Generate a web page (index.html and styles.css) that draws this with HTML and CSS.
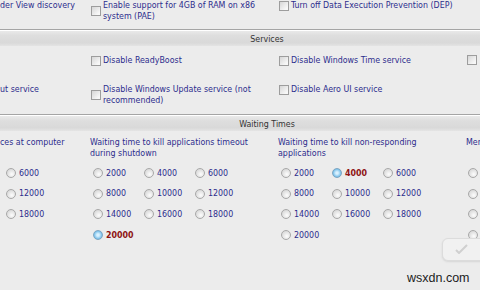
FILE: index.html
```html
<!DOCTYPE html>
<html lang="en">
<head>
    <meta charset="UTF-8">
    <title>Tweaks</title>
    <link rel="stylesheet" href="styles.css">
</head>
<body>
    <div class="row top-row">
        <div class="cell">der View discovery</div>
        <label class="check"><span class="box"></span><span>Enable support for 4GB of RAM on x86<br>system (PAE)</span></label>
        <label class="check"><span class="box"></span><span>Turn off Data Execution Prevention (DEP)</span></label>
        <div class="cell"></div>
    </div>

    <div class="section-head">Services</div>

    <div class="row services">
        <div class="cell"></div>
        <label class="check"><span class="box"></span><span>Disable ReadyBoost</span></label>
        <label class="check"><span class="box"></span><span>Disable Windows Time service</span></label>
        <label class="check"><span class="box"></span><span></span></label>

        <div class="cell">ut service</div>
        <label class="check"><span class="box"></span><span>Disable Windows Update service (not<br>recommended)</span></label>
        <label class="check"><span class="box"></span><span>Disable Aero UI service</span></label>
        <div class="cell"></div>
    </div>

    <div class="section-head second">Waiting Times</div>

    <div class="row times">
        <div class="group">
            <div class="caption">ces at computer<br>&nbsp;</div>
            <div class="radios single">
                <span class="radio"><i></i>6000</span>
                <span class="radio"><i></i>12000</span>
                <span class="radio"><i></i>18000</span>
            </div>
        </div>
        <div class="group">
            <div class="caption">Waiting time to kill applications timeout<br>during shutdown</div>
            <div class="radios">
                <span class="radio"><i></i>2000</span>
                <span class="radio"><i></i>4000</span>
                <span class="radio"><i></i>6000</span>
                <span class="radio"><i></i>8000</span>
                <span class="radio"><i></i>10000</span>
                <span class="radio"><i></i>12000</span>
                <span class="radio"><i></i>14000</span>
                <span class="radio"><i></i>16000</span>
                <span class="radio"><i></i>18000</span>
                <span class="radio on"><i></i>20000</span>
            </div>
        </div>
        <div class="group">
            <div class="caption">Waiting time to kill non-responding<br>applications</div>
            <div class="radios">
                <span class="radio"><i></i>2000</span>
                <span class="radio on"><i></i>4000</span>
                <span class="radio"><i></i>6000</span>
                <span class="radio"><i></i>8000</span>
                <span class="radio"><i></i>10000</span>
                <span class="radio"><i></i>12000</span>
                <span class="radio"><i></i>14000</span>
                <span class="radio"><i></i>16000</span>
                <span class="radio"><i></i>18000</span>
                <span class="radio"><i></i>20000</span>
            </div>
        </div>
        <div class="group last">
            <div class="caption">Mer<br>&nbsp;</div>
            <div class="radios single">
                <span class="radio"><i></i></span>
                <span class="radio"><i></i></span>
                <span class="radio"><i></i></span>
                <span class="radio"><i></i></span>
            </div>
        </div>
    </div>

    <div class="apply-btn">
        <svg width="14" height="10" viewBox="0 0 14 10"><path d="M1 6 L4 9 L12 1" fill="none" stroke="#d0d0d0" stroke-width="2"/></svg>
    </div>
    <div class="watermark">wsxdn.com</div>
</body>
</html>
```

FILE: styles.css
```css
body {
    margin: 0;
    width: 480px;
    height: 290px;
    overflow: hidden;
    position: relative;
    background-color: #ececec;
    color: #2d2d8c;
    font-family: 'DejaVu Sans Condensed', 'DejaVu Sans', sans-serif;
    font-size: 8.8px;
    line-height: 11px;
}

.row {
    display: grid;
    grid-template-columns: 90px 188px 188px 14px;
    width: 480px;
    align-items: start;
    white-space: nowrap;
}

.check {
    display: flex;
    align-items: center;
    padding-left: 1px;
}

.check .box {
    flex: none;
    width: 8px;
    height: 8px;
    margin-right: 2px;
    border: 1px solid #9d9d9d;
    background: linear-gradient(135deg, #d6d6d6, #f7f7f7 80%);
}

.section-head {
    margin-top: 7px;
    padding: 4px 0 2px 54px;
    line-height: 10px;
    text-align: center;
    color: #333;
    border-top: 1px solid #a5a5a5;
    box-shadow: inset 0 1px 0 #fff;
    background: linear-gradient(#ececec, #dedede 35%, #d9d9d9 80%, #e4e4e4);
}

.section-head.second {
    margin-top: 8px;
}

.services {
    margin-top: 9px;
    row-gap: 18px;
}

.times {
    margin-top: 6px;
}

.caption {
    margin-bottom: 8.5px;
}

.radios {
    display: grid;
    grid-template-columns: repeat(3, 51px);
    row-gap: 9.7px;
}

.radios.single {
    grid-template-columns: 60px;
}

.last .radios.single {
    grid-template-columns: 14px;
}

.radio {
    display: flex;
    align-items: center;
    height: 11px;
    padding-left: 3px;
}

.single .radio {
    padding-left: 6px;
}

.last .radio {
    padding-left: 2px;
}

.radio i {
    flex: none;
    width: 8px;
    height: 8px;
    margin-right: 3px;
    border: 1px solid #a8a8a8;
    border-radius: 50%;
    background: radial-gradient(circle at 60% 65%, #fdfdfd, #d4d4d4 85%);
}

.radio.on {
    color: #8e1414;
    font-weight: bold;
}

.radio.on i {
    border-color: #7fa6c2;
    background: radial-gradient(circle at 50% 50%, #d9f1ff 20%, #6cb9e6 75%);
}

.apply-btn {
    position: absolute;
    left: 442px;
    top: 238px;
    width: 52px;
    height: 23px;
    border: 1px solid #dcdcdc;
    border-radius: 6px;
    background: #f1f1f1;
    box-shadow: 0 1px 2px #d6d6d6;
    padding: 5px 0 0 12px;
    box-sizing: border-box;
}

.watermark {
    position: absolute;
    left: 407px;
    top: 271px;
    color: #1c1c1c;
    font-family: 'Liberation Sans', Arial, sans-serif;
    font-size: 12.5px;
    line-height: 14px;
}
```
